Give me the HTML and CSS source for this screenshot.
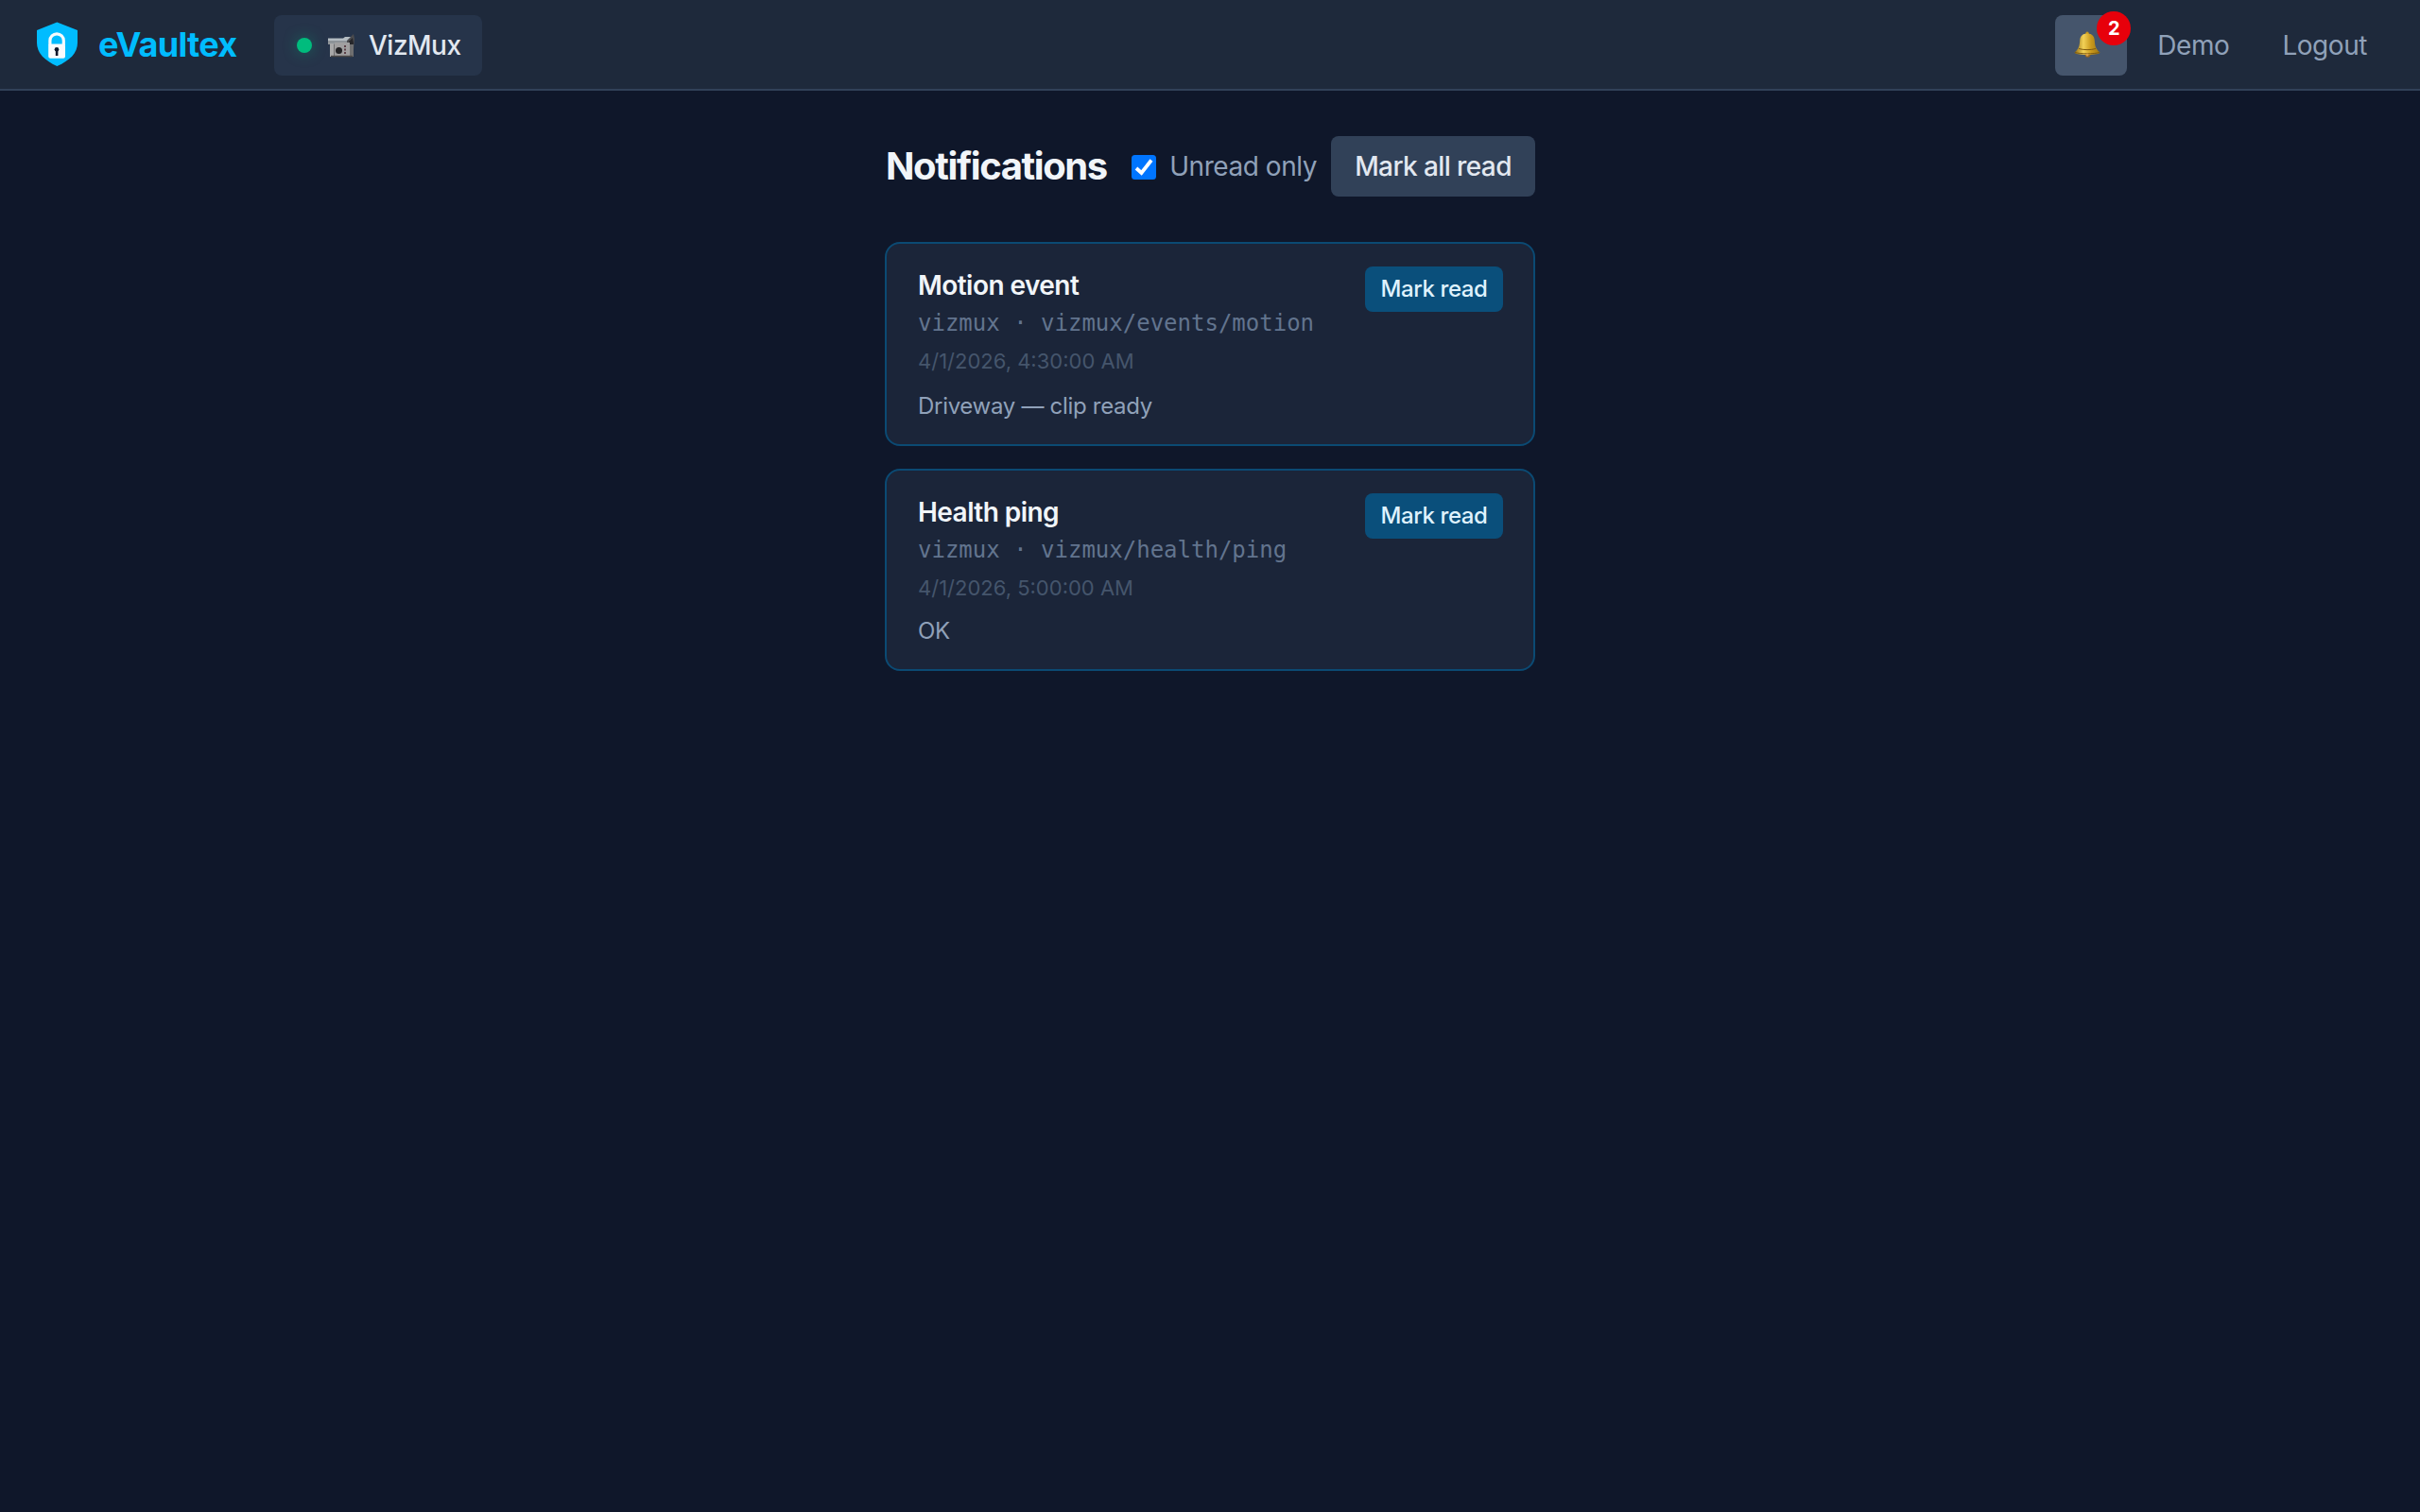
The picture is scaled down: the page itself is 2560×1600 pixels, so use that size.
FILE: index.html
```html
<!DOCTYPE html>
<html lang="en">
<head>
    <meta charset="UTF-8">
    <meta name="viewport" content="width=device-width, initial-scale=1.0">
    <title>eVaultex - Notifications</title>
    <link rel="stylesheet" href="styles.css">
</head>
<body>
    <header class="topbar">
        <a class="brand">
            <svg class="brand-logo" viewBox="0 0 56 56">
                <path d="M28.3 3.500 50 12v13c0 11-8 19-21.700 25C15 44 7 36 7 25V12z" fill="#00bcff"/>
                <path d="M20.900 28v-5a7.200 7.200 0 0 1 14.400 0v5" fill="none" stroke="#f8fafc" stroke-width="3.200"/>
                <rect x="19.200" y="26.500" width="17.800" height="15.200" rx="2" fill="#f8fafc"/>
                <circle cx="28" cy="32.300" r="2.300" fill="#0f172b"/>
                <rect x="26.800" y="33" width="2.600" height="6" fill="#0f172b"/>
            </svg>
            <span class="brand-name">eVaultex</span>
        </a>
        <div class="app-chip">
            <span class="status-dot"></span>
            <svg class="camera" viewBox="0 0 30 30">
                <path d="M20 11 28 3l1 5-1 12-6 2z" fill="#4b4b4e"/>
                <path d="M23 11l4-4 1 6-3 6z" fill="#26262a"/>
                <rect x="1" y="8" width="20" height="6" fill="#8d9398"/>
                <path d="M1 7.500h16l2-1.500h6l-4 4H1z" fill="#b4bcc2"/>
                <rect x="3" y="14" width="25" height="13" fill="#6f6f70"/>
                <rect x="8" y="12" width="16" height="14" fill="#a09fa0"/>
                <rect x="3" y="13" width="4" height="14" fill="#a9a9aa"/>
                <circle cx="12.500" cy="20.500" r="3.500" fill="#222225"/>
                <path d="M18 16h2M18 19.500h2M18 23h2" stroke="#5c4148" stroke-width="1.800"/>
                <path d="M4 26.500h23" stroke="#4d4a48" stroke-width="1.500"/>
            </svg>
            <span class="app-name">VizMux</span>
        </div>
        <nav class="actions">
            <button type="button" class="bell-btn">
                <svg class="bell" viewBox="0 0 28 28">
                    <defs>
                        <linearGradient id="gold" x1="0" x2="1" y1="0" y2="0">
                            <stop offset="0" stop-color="#8f6a10"/>
                            <stop offset=".35" stop-color="#f3d257"/>
                            <stop offset=".65" stop-color="#c9991c"/>
                            <stop offset="1" stop-color="#9b7412"/>
                        </linearGradient>
                    </defs>
                    <circle cx="14" cy="2.200" r="1.700" fill="#c9991c"/>
                    <circle cx="14.500" cy="25" r="2.800" fill="#94631c"/>
                    <path d="M14 2.500c5.500 0 7.600 3.200 7.800 7.500.3 5.500 1.200 9 5.700 12.500 0 1.500-5.500 2.500-13.500 2.500S.5 24 .5 22.500C5 19 5.900 15.500 6.200 10 6.400 5.700 8.500 2.500 14 2.500z" fill="url(#gold)"/>
                    <path d="M5 18.500c5 1.500 13 1.500 18 0M1 22.500c6 1.800 20 1.800 26 0" fill="none" stroke="#7d5910" stroke-width="1"/>
                    <circle cx="14" cy="25" r="1.500" fill="#d69b48"/>
                </svg>
                <span class="badge">2</span>
            </button>
            <button type="button" class="nav-link">Demo</button>
            <button type="button" class="nav-link">Logout</button>
        </nav>
    </header>

    <main class="page">
        <div class="page-head">
            <h1 class="page-title">Notifications</h1>
            <label class="filter">
                <svg class="checkbox" viewBox="0 0 26 26">
                    <rect width="26" height="26" rx="3.500" fill="#0075ff"/>
                    <path d="M5 14l5.500 5L21 5.500" fill="none" stroke="#fff" stroke-width="3.800"/>
                </svg>
                <span>Unread only</span>
            </label>
            <button type="button" class="mark-all">Mark all read</button>
        </div>

        <article class="card">
            <div class="card-info">
                <h2 class="card-title">Motion event</h2>
                <p class="card-topic">vizmux · vizmux/events/motion</p>
                <p class="card-time">4/1/2026, 4:30:00 AM</p>
                <p class="card-text card-text-long">Driveway — clip ready</p>
            </div>
            <button type="button" class="mark-read">Mark read</button>
        </article>

        <article class="card">
            <div class="card-info">
                <h2 class="card-title">Health ping</h2>
                <p class="card-topic">vizmux · vizmux/health/ping</p>
                <p class="card-time">4/1/2026, 5:00:00 AM</p>
                <p class="card-text">OK</p>
            </div>
            <button type="button" class="mark-read">Mark read</button>
        </article>
    </main>
</body>
</html>
```

FILE: styles.css
```css
* {
    box-sizing: border-box;
}
body {
    margin: 0;
    min-height: 100vh;
    background-color: #0f172a;
    color: #f1f5f9;
    font-family: Inter, "Liberation Sans", sans-serif;
    font-size: 28px;
    line-height: 40px;
    letter-spacing: -0.45px;
}
h1, h2, p {
    margin: 0;
}
button {
    border: none;
    font: inherit;
    letter-spacing: inherit;
    cursor: pointer;
}

/* top bar */
.topbar {
    display: flex;
    align-items: center;
    height: 96px;
    padding: 2px 32px 0;
    background-color: #1e293b;
    border-bottom: 2px solid #314158;
}
.brand {
    display: flex;
    align-items: center;
    gap: 16px;
    width: 218px;
    margin-right: 40px;
}
.brand-logo {
    width: 56px;
    height: 56px;
    flex-shrink: 0;
}
.brand-name {
    padding-bottom: 2px;
    color: #00bcff;
    font-size: 36px;
    font-weight: 700;
    letter-spacing: -0.7px;
}
.app-chip {
    display: flex;
    align-items: center;
    width: 220px;
    height: 64px;
    padding: 0 24px;
    border-radius: 8px;
    background-color: #26344a;
}
.status-dot {
    width: 16px;
    height: 16px;
    flex-shrink: 0;
    margin-right: 16px;
    border-radius: 50%;
    background-color: #00bc7d;
    box-shadow: 0 0 16px rgba(0, 188, 125, 0.4);
}
.camera {
    width: 30px;
    height: 30px;
    flex-shrink: 0;
    margin-right: 14px;
}
.app-name {
    color: #e2e8f0;
    font-weight: 500;
    letter-spacing: -0.5px;
}
.actions {
    display: flex;
    align-items: center;
    gap: 8px;
    margin-left: auto;
}
.bell-btn {
    position: relative;
    display: flex;
    align-items: center;
    justify-content: center;
    width: 76px;
    height: 64px;
    padding: 0 8px 2px 0;
    border-radius: 8px;
    background-color: #45556c;
}
.bell {
    width: 28px;
    height: 28px;
}
.badge {
    position: absolute;
    top: -4px;
    right: -4px;
    width: 36px;
    height: 36px;
    border-radius: 50%;
    background-color: #e7000b;
    color: #fff;
    font-size: 20px;
    font-weight: 700;
    line-height: 37px;
    letter-spacing: 0;
    text-align: center;
}
.nav-link {
    padding: 12px 24px;
    background: none;
    color: #90a1b9;
}

/* notifications */
.page {
    display: flex;
    flex-direction: column;
    gap: 24px;
    width: 688px;
    margin: 48px auto;
}
.page-head {
    display: flex;
    align-items: center;
    justify-content: flex-end;
    margin-bottom: 24px;
}
.page-title {
    margin-right: auto;
    padding-left: 1px;
    font-size: 40px;
    font-weight: 700;
    letter-spacing: -1.4px;
}
.filter {
    display: flex;
    align-items: center;
    gap: 14px;
    margin-right: 15px;
    color: #90a1b9;
}
.checkbox {
    width: 26px;
    height: 26px;
    margin-top: 2px;
}
.mark-all {
    width: 216px;
    height: 64px;
    padding: 0;
    border-radius: 8px;
    background-color: #314158;
    color: #e2e8f0;
    font-weight: 500;
    letter-spacing: -0.6px;
}
.card {
    display: flex;
    align-items: flex-start;
    justify-content: space-between;
    padding: 24px 32px 24px 33px;
    border: 2px solid #0b4a73;
    border-radius: 16px;
    background-color: #1b2539;
}
.card-title {
    font-size: 28px;
    font-weight: 600;
    letter-spacing: -0.55px;
}
.card-topic {
    margin-top: 4px;
    color: #62748e;
    font-family: "DejaVu Sans Mono", monospace;
    font-size: 24px;
    line-height: 32px;
    letter-spacing: 0;
}
.card-time {
    margin-top: 8px;
    color: #45556c;
    font-size: 22px;
    line-height: 32px;
    letter-spacing: 0;
}
.card-text {
    margin-top: 14px;
    color: #90a1b9;
    font-size: 24px;
    line-height: 32px;
    letter-spacing: -0.3px;
}
.card-text-long {
    margin-top: 16px;
}
.mark-read {
    width: 146px;
    height: 48px;
    padding: 0;
    border-radius: 8px;
    background-color: #0a4f7b;
    color: #dff2fe;
    font-size: 24px;
    font-weight: 500;
    line-height: 32px;
    letter-spacing: -0.4px;
}
```
